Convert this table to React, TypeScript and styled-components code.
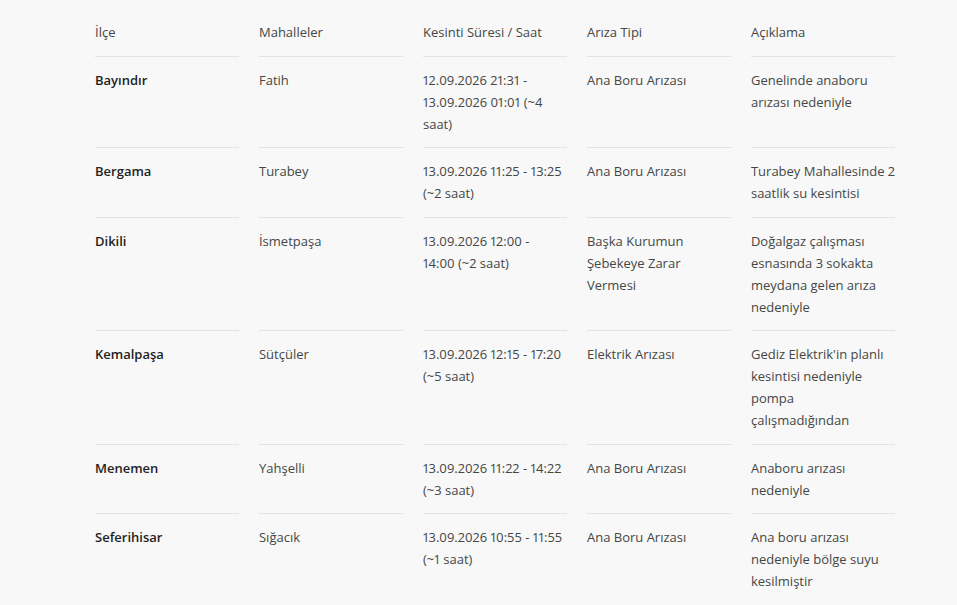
import * as React from 'react'
import styled, { createGlobalStyle } from 'styled-components'

const GlobalStyle = createGlobalStyle`
  html, body {
    margin: 0;
    padding: 0;
    background: #f8f8f8;
  }
  body {
    font-family: "Open Sans", "Noto Sans", sans-serif;
    -webkit-font-smoothing: antialiased;
  }
`

const outages = [
  {
    district: 'Bayındır',
    area: 'Fatih',
    time: '12.09.2026 21:31 - 13.09.2026 01:01 (~4 saat)',
    kind: 'Ana Boru Arızası',
    note: 'Genelinde anaboru arızası nedeniyle'
  },
  {
    district: 'Bergama',
    area: 'Turabey',
    time: '13.09.2026 11:25 - 13:25 (~2 saat)',
    kind: 'Ana Boru Arızası',
    note: 'Turabey Mahallesinde 2 saatlik su kesintisi'
  },
  {
    district: 'Dikili',
    area: 'İsmetpaşa',
    time: '13.09.2026 12:00 - 14:00 (~2 saat)',
    kind: 'Başka Kurumun Şebekeye Zarar Vermesi',
    note: 'Doğalgaz çalışması esnasında 3 sokakta meydana gelen arıza nedeniyle'
  },
  {
    district: 'Kemalpaşa',
    area: 'Sütçüler',
    time: '13.09.2026 12:15 - 17:20 (~5 saat)',
    kind: 'Elektrik Arızası',
    note: "Gediz Elektrik'in planlı kesintisi nedeniyle pompa çalışmadığından"
  },
  {
    district: 'Menemen',
    area: 'Yahşelli',
    time: '13.09.2026 11:22 - 14:22 (~3 saat)',
    kind: 'Ana Boru Arızası',
    note: 'Anaboru arızası nedeniyle'
  },
  {
    district: 'Seferihisar',
    area: 'Sığacık',
    time: '13.09.2026 10:55 - 11:55 (~1 saat)',
    kind: 'Ana Boru Arızası',
    note: 'Ana boru arızası nedeniyle bölge suyu kesilmiştir'
  }
]

const headers = ['İlçe', 'Mahalleler', 'Kesinti Süresi / Saat', 'Arıza Tipi', 'Açıklama']

const Page = styled.div`
  padding: 9px 0 0 95px;
`

const Table = styled.div`
  display: grid;
  grid-template-columns: repeat(5, 144.4px);
  column-gap: 19.6px;
`

const Cell = styled.div<{ $strong?: boolean; $tight?: boolean }>`
  padding: 12px ${p => (p.$tight ? '4px' : '0')} 12.5px 0;
  border-bottom: 1px solid #e3e3e3;
  font-size: 13px;
  line-height: 22px;
  font-variant-numeric: proportional-nums;
  color: ${p => (p.$strong ? '#1f1f1f' : '#444746')};
  font-weight: ${p => (p.$strong ? 600 : 400)};
`

const App = () => (
  <>
    <GlobalStyle />
    <Page>
      <Table>
        {headers.map(h => <Cell key={h}>{h}</Cell>)}
        {outages.map(o => (
          <React.Fragment key={o.district}>
            <Cell $strong>{o.district}</Cell>
            <Cell>{o.area}</Cell>
            <Cell $tight>{o.time}</Cell>
            <Cell>{o.kind}</Cell>
            <Cell>{o.note}</Cell>
          </React.Fragment>
        ))}
      </Table>
    </Page>
  </>
)

export default App
